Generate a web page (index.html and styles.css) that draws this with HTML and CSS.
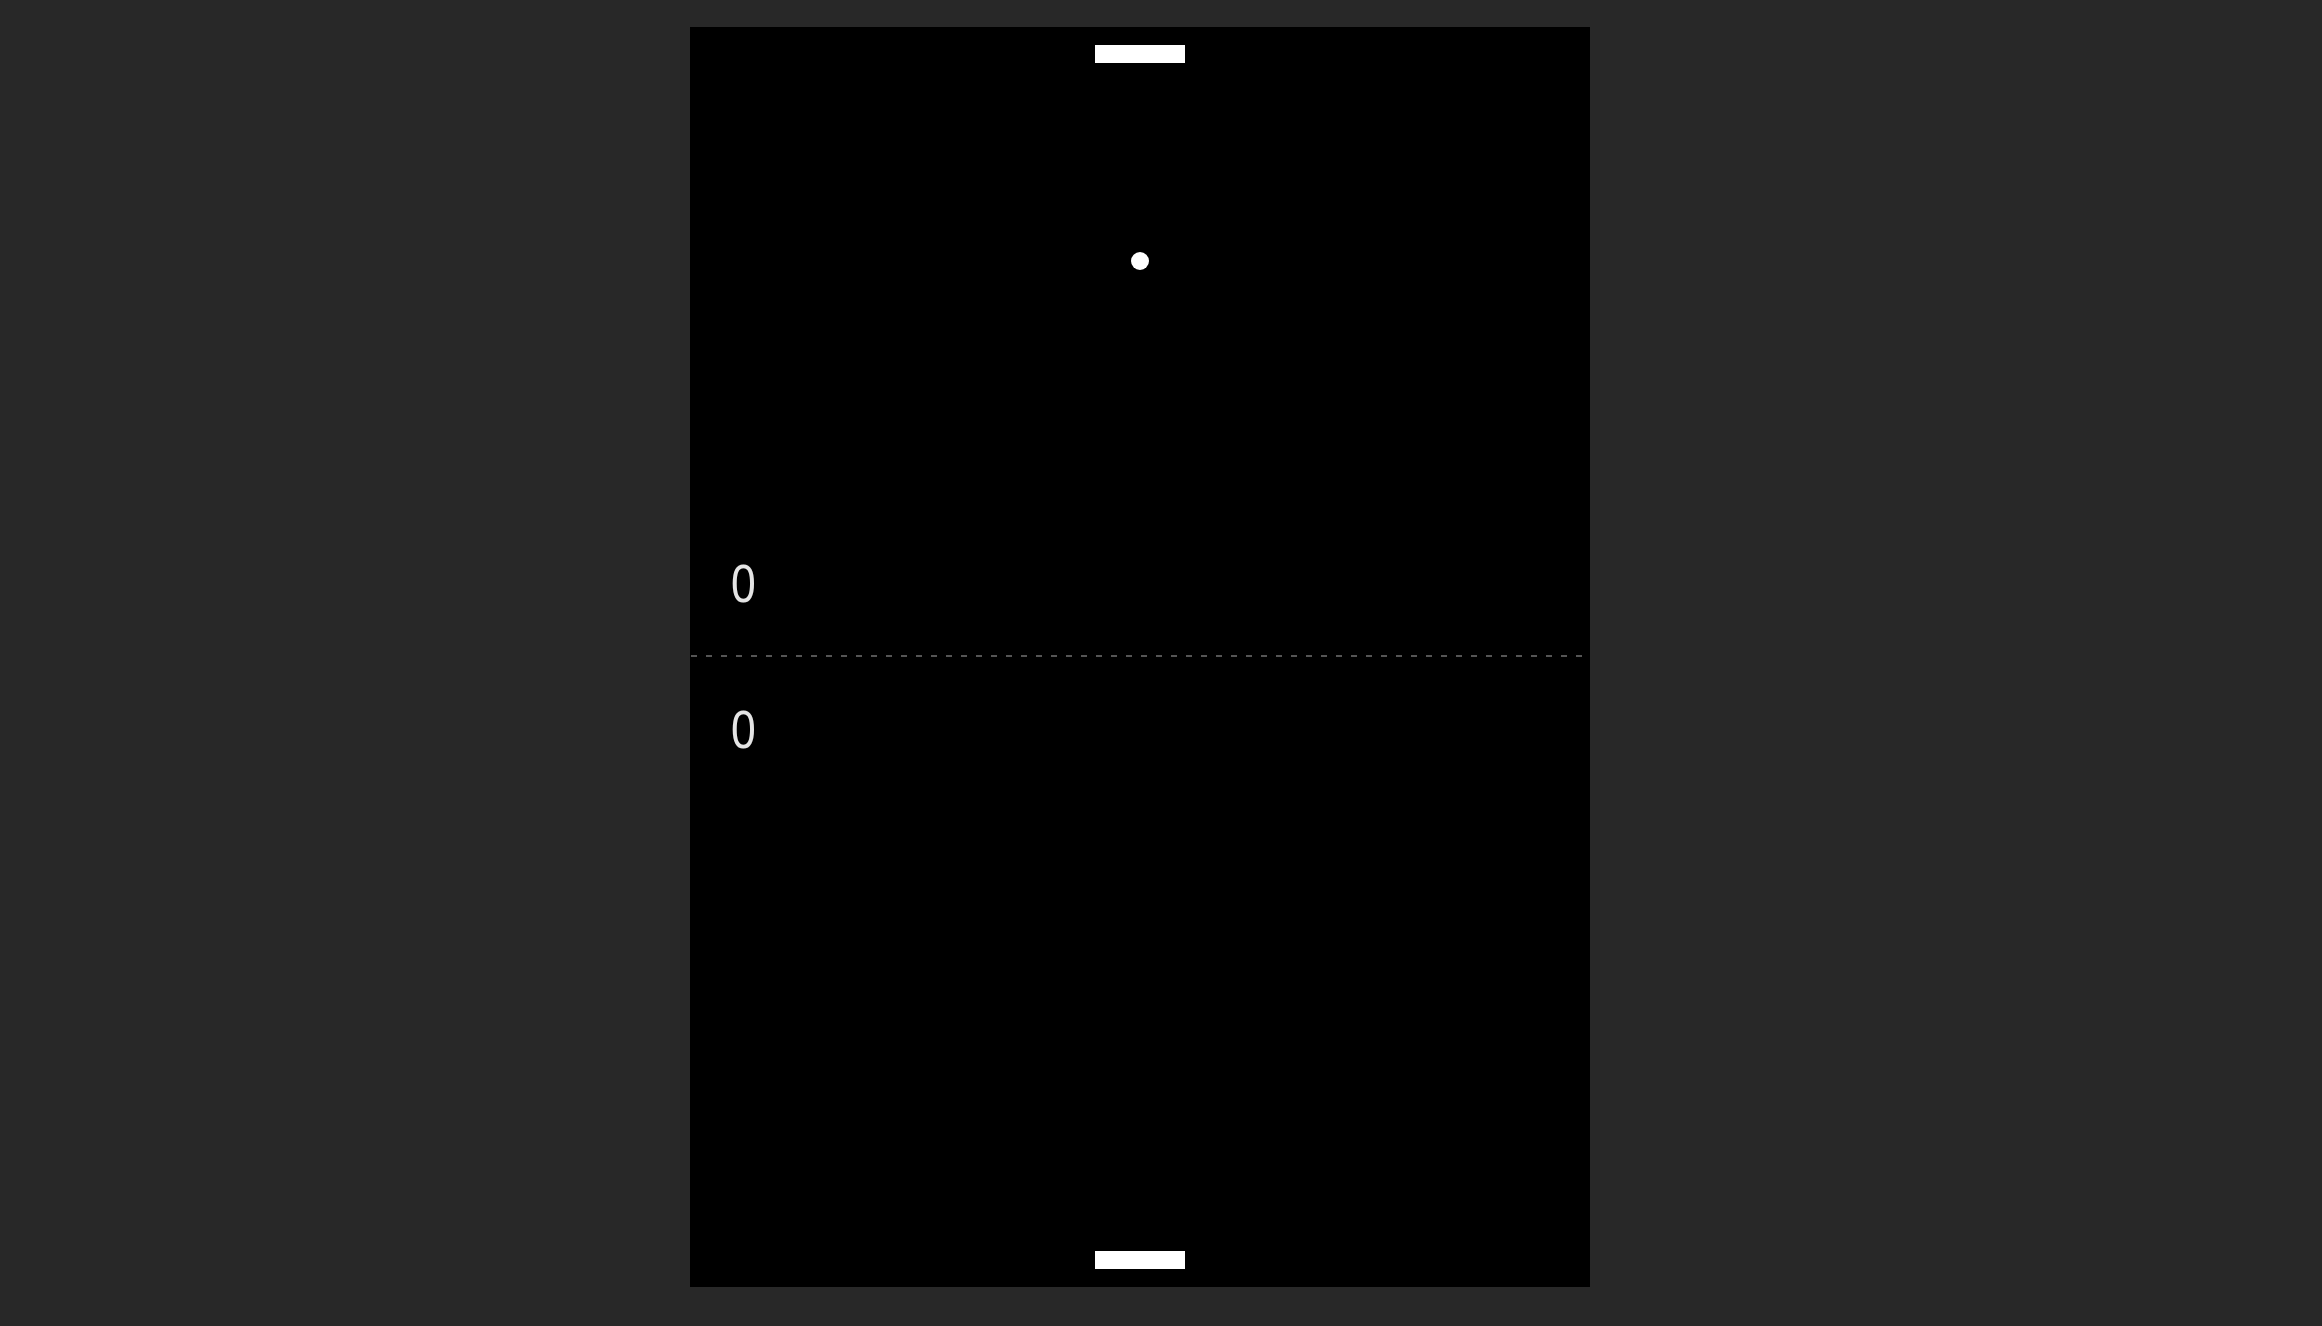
FILE: index.html
```html
<!DOCTYPE html>
<html lang="en">
  <head>
    <meta charset="UTF-8" />
    <meta name="viewport" content="width=device-width, initial-scale=1.0" />
    <title>Pong</title>
    <link rel="stylesheet" href="styles.css">
  </head>
  <body>
    <main class="table">
      <section class="half half-top">
        <div class="paddle"></div>
        <div class="ball"></div>
        <div class="score">0</div>
      </section>
      <div class="net"></div>
      <section class="half half-bottom">
        <div class="score">0</div>
        <div class="paddle"></div>
      </section>
    </main>
  </body>
</html>
```

FILE: styles.css
```css
body {
  margin: 0;
  padding: 0;
  background-color: #282828;
  font-family: "Liberation Sans", Arial, sans-serif;
}
.table {
  position: relative;
  display: flex;
  flex-direction: column;
  width: 900px;
  height: 1260px;
  margin: 27px 0 0 690px;
  background: #000;
}
.half {
  display: flex;
  flex-direction: column;
  align-items: flex-start;
}
.half-top {
  height: 628px;
  justify-content: space-between;
}
.half-bottom {
  height: 630px;
  justify-content: space-between;
}
.paddle {
  align-self: center;
  width: 90px;
  height: 18px;
  background: #fff;
}
.half-top .paddle {
  margin-top: 18px;
}
.half-bottom .paddle {
  margin-bottom: 18px;
}
.ball {
  position: absolute;
  left: 441px;
  top: 225px;
  width: 18px;
  height: 18px;
  border-radius: 50%;
  background: #fff;
}
.score {
  margin-left: 41px;
  color: #e4e4e4;
  font-size: 53px;
  line-height: 53px;
  transform: scaleX(0.84);
  transform-origin: left center;
}
.half-top .score {
  margin-bottom: 45px;
}
.half-bottom .score {
  margin-top: 46px;
}
/* dashed centre line: 6px dash, 9px gap */
.net {
  height: 2px;
  background: repeating-linear-gradient(to right, transparent 0 1px, #555 1px 7px, transparent 7px 15px);
}
```
